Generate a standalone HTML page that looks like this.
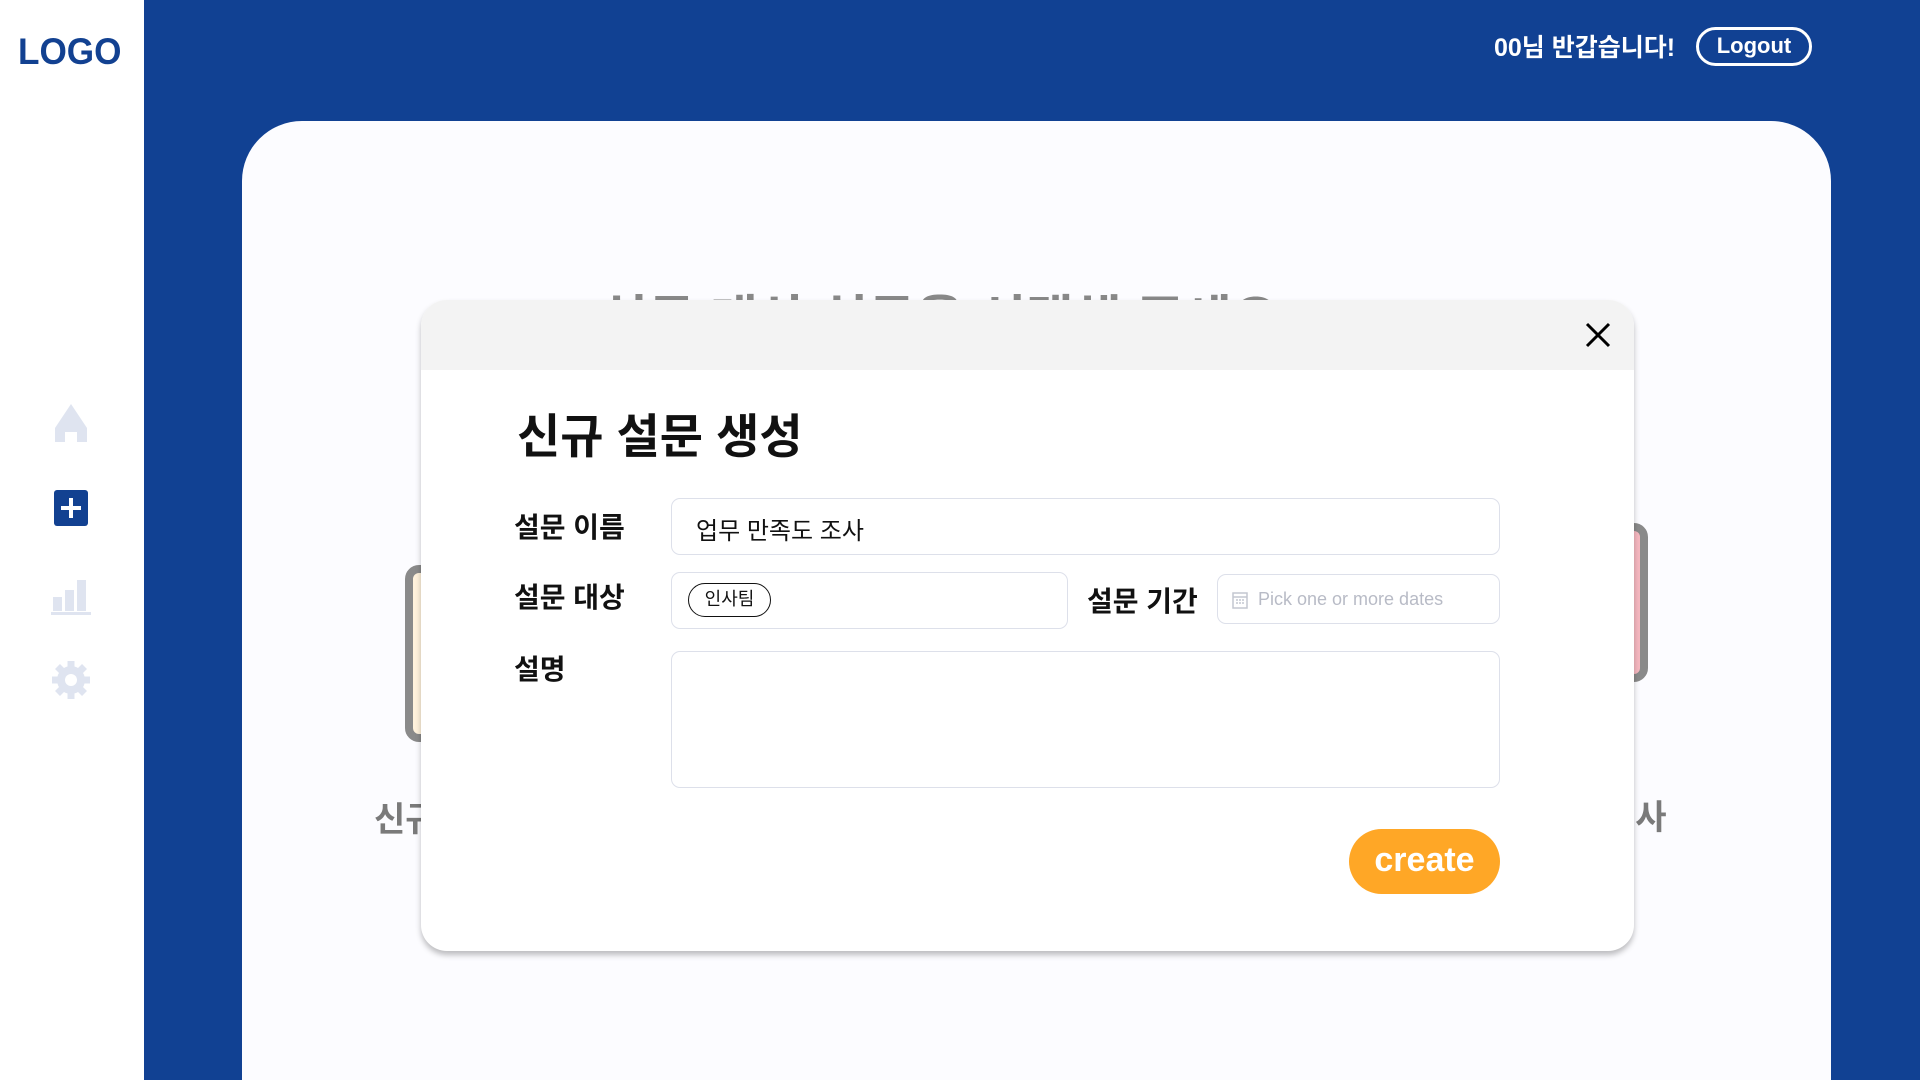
<!DOCTYPE html>
<html><head><meta charset="utf-8"><style>
*{margin:0;padding:0;box-sizing:border-box}
html{width:1920px;height:1080px;overflow:hidden}
body{width:1920px;height:1080px;overflow:hidden;background:#114193;font-family:"Liberation Sans","Noto Sans CJK KR",sans-serif;position:relative}
.side{position:absolute;left:0;top:0;width:144px;height:1080px;background:#fff}
.logo{position:absolute;left:18px;top:31px;font-size:37px;font-weight:bold;color:#124191;transform:scaleX(0.95);transform-origin:left}
.ic{position:absolute;left:51px;width:40px;height:40px}
.greet{position:absolute;left:1494px;top:28px;color:#fff;font-weight:bold;font-size:25px}
.logout{position:absolute;left:1696px;top:27px;width:116px;height:39px;border:3px solid #fff;border-radius:20px;color:#fff;font-weight:bold;font-size:22px;text-align:center;line-height:32px}
.card{position:absolute;left:242px;top:121px;width:1589px;height:959px;background:#fcfcff;border-radius:60px 60px 0 0}
.bgt{position:absolute;left:600px;top:278px;font-size:52px;font-weight:bold;color:#888}
.lc{position:absolute;left:405px;top:565px;width:40px;height:177px;border:8px solid #8a8a8a;border-radius:14px;background:#fff2dc}
.rc{position:absolute;left:1600px;top:523px;width:48px;height:159px;border:8px solid #8a8a8a;border-radius:14px;background:#f6b8c0}
.bl{position:absolute;font-size:34px;font-weight:bold;color:#7a7a7a}
.modal{position:absolute;left:421px;top:300px;width:1213px;height:651px;background:#fff;border-radius:26px;box-shadow:0 4px 6px rgba(0,0,0,.25);overflow:hidden}
.mh{height:70px;background:#f3f3f3}
.close{position:absolute;left:1164px;top:22px;width:26px;height:26px}
.title{position:absolute;left:96px;top:98px;font-size:47px;font-weight:bold;color:#111}
.lab{position:absolute;font-size:28px;font-weight:bold;color:#111}
.inp{position:absolute;border:1.5px solid #dde0ea;border-radius:9px;background:#fff}
.chip{position:absolute;left:16px;top:10px;width:83px;height:34px;border:1.5px solid #111;border-radius:17px;font-size:18px;text-align:center;line-height:31px;color:#111}
.create{position:absolute;left:928px;top:529px;width:151px;height:65px;border-radius:33px;background:#ffa726;color:#fff;font-weight:bold;font-size:34px;text-align:center;line-height:62px}
</style></head><body>
<div class="side">
<div class="logo">LOGO</div>
<svg class="ic" style="top:402px" viewBox="0 0 40 40"><path d="M20 2 L36 26 V40 H26 V30 H14 V40 H4 V26 Z" fill="#dfe4f0"/></svg>
<svg class="ic" style="top:488px" viewBox="0 0 40 40"><rect x="3" y="2" width="34" height="36" rx="3" fill="#124191"/><path d="M20 10V30M10 20H30" stroke="#fff" stroke-width="4"/></svg>
<svg class="ic" style="top:575px" viewBox="0 0 40 40"><rect x="2" y="22" width="9" height="14" fill="#dfe4f0"/><rect x="14" y="15" width="9" height="21" fill="#dfe4f0"/><rect x="26" y="5" width="9" height="31" fill="#dfe4f0"/><rect x="0" y="37" width="40" height="3" fill="#dfe4f0"/></svg>
<svg class="ic" style="top:660px" viewBox="0 0 40 40"><g fill="#dfe4f0"><circle cx="20" cy="20" r="14"/><g stroke="#dfe4f0" stroke-width="7"><path d="M20 1V39M1 20H39M6.5 6.5L33.5 33.5M33.5 6.5L6.5 33.5"/></g></g><circle cx="20" cy="20" r="6" fill="#fff"/></svg>
</div>
<div class="greet">00님 반갑습니다!</div>
<div class="logout">Logout</div>
<div class="card"></div>
<div class="bgt">설문 대상 설문을 선택해 주세요?</div>
<div class="lc"></div><div class="rc"></div>
<div class="bl" style="left:374px;top:792px">신규</div>
<div class="bl" style="left:1604px;top:790px">조사</div>
<div class="modal">
<div class="mh"></div>
<svg class="close" viewBox="0 0 26 26"><path d="M2 2L24 24M24 2L2 24" stroke="#000" stroke-width="3"/></svg>
<div class="title">신규 설문 생성</div>
<div class="lab" style="left:93px;top:206px">설문 이름</div>
<div class="lab" style="left:93px;top:276px">설문 대상</div>
<div class="lab" style="left:93px;top:348px">설명</div>
<div class="lab" style="left:666px;top:280px">설문 기간</div>
<div class="inp" style="left:250px;top:198px;width:829px;height:57px"><span style="position:absolute;left:24px;top:12px;font-size:24px;color:#111">업무 만족도 조사</span></div>
<div class="inp" style="left:250px;top:272px;width:397px;height:57px"><div class="chip">인사팀</div></div>
<div class="inp" style="left:796px;top:274px;width:283px;height:50px"><svg style="position:absolute;left:14px;top:16px" width="16" height="18" viewBox="0 0 16 18"><rect x="1" y="2" width="14" height="15" fill="none" stroke="#c4c7d0" stroke-width="1.5"/><path d="M1 6H15M4 9h2M7 9h2M10 9h2M4 12h2M7 12h2M10 12h2" stroke="#c4c7d0" stroke-width="1.5"/></svg><span style="position:absolute;left:40px;top:14px;font-size:18px;color:#b8bbc6">Pick one or more dates</span></div>
<div class="inp" style="left:250px;top:351px;width:829px;height:137px"></div>
<div class="create">create</div>
</div>
</body></html>
